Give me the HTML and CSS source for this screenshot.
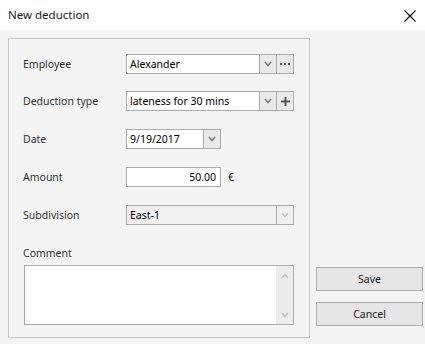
FILE: index.html
```html
<!DOCTYPE html>
<html>
<head>
<meta charset="utf-8">
<link rel="stylesheet" href="styles.css">
</head>
<body>
<div class="window">
  <div class="titlebar">
    <span class="title">New deduction</span>
    <svg class="close" width="12" height="12" viewBox="0 0 12 12"><path d="M0.5 0.5 L11.5 11.5 M11.5 0.5 L0.5 11.5" stroke="#000" stroke-width="1.1" fill="none"/></svg>
  </div>
  <div class="content">
    <div class="panel">
      <div class="row r1">
        <div class="label">Employee</div>
        <div class="field w-long">
          <div class="text">Alexander</div>
          <div class="btn"><svg width="8" height="6" viewBox="0 0 8 6"><path d="M1 1 L4 4.5 L7 1" stroke="#7a7a7a" stroke-width="1.6" fill="none"/></svg></div>
          <div class="btn"><svg width="10" height="4" viewBox="0 0 10 4"><rect x="0" y="1" width="2" height="2" fill="#555"/><rect x="4" y="1" width="2" height="2" fill="#555"/><rect x="8" y="1" width="2" height="2" fill="#555"/></svg></div>
        </div>
      </div>
      <div class="row r2">
        <div class="label">Deduction type</div>
        <div class="field w-long">
          <div class="text">lateness for 30 mins</div>
          <div class="btn"><svg width="8" height="6" viewBox="0 0 8 6"><path d="M1 1 L4 4.5 L7 1" stroke="#7a7a7a" stroke-width="1.6" fill="none"/></svg></div>
          <div class="btn"><svg width="9" height="9" viewBox="0 0 9 9"><path d="M0 4.5 H9 M4.5 0 V9" stroke="#555" stroke-width="2" fill="none"/></svg></div>
        </div>
      </div>
      <div class="row">
        <div class="label">Date</div>
        <div class="field w-short">
          <div class="text">9/19/2017</div>
          <div class="btn"><svg width="8" height="6" viewBox="0 0 8 6"><path d="M1 1 L4 4.5 L7 1" stroke="#7a7a7a" stroke-width="1.6" fill="none"/></svg></div>
        </div>
      </div>
      <div class="row">
        <div class="label">Amount</div>
        <div class="field w-short">
          <div class="text num">50.00</div>
        </div>
        <span class="currency">€</span>
      </div>
      <div class="row">
        <div class="label">Subdivision</div>
        <div class="field w-long disabled">
          <div class="text">East-1</div>
          <div class="btn"><svg width="8" height="6" viewBox="0 0 8 6"><path d="M1 1 L4 4.5 L7 1" stroke="#c2c2c2" stroke-width="1.6" fill="none"/></svg></div>
        </div>
      </div>
      <div class="comment-label">Comment</div>
      <div class="textarea">
        <div class="textarea-body"></div>
        <div class="scrollbar">
          <svg width="8" height="6" viewBox="0 0 8 6"><path d="M1 5 L4 1.5 L7 5" stroke="#c4c4c4" stroke-width="1.6" fill="none"/></svg>
          <svg width="8" height="6" viewBox="0 0 8 6"><path d="M1 1 L4 4.5 L7 1" stroke="#c4c4c4" stroke-width="1.6" fill="none"/></svg>
        </div>
      </div>
    </div>
    <div class="actions">
      <div class="button">Save</div>
      <div class="button">Cancel</div>
    </div>
  </div>
</div>
</body>
</html>
```
FILE: styles.css
```css
* { box-sizing: border-box; }
html, body { margin: 0; padding: 0; }
body {
  width: 425px;
  height: 344px;
  background: #f4f4f4;
  font-family: "Noto Sans", "Open Sans", sans-serif;
  font-size: 10.5px;
  color: #333;
  overflow: hidden;
}
.titlebar {
  height: 30px;
  background: #fff;
  display: flex;
  align-items: center;
  justify-content: space-between;
  padding: 0 9px 0 8px;
}
.title {
  font-size: 11.5px;
  color: #1a1a1a;
  margin-top: -1px;
}
.close { margin-top: 1px; }
.content {
  display: flex;
  align-items: flex-start;
  padding: 8px 0 0 8px;
}
.panel {
  width: 302px;
  height: 300px;
  border: 1px solid #c6c6c6;
  padding: 15px 0 0 14px;
  display: flex;
  flex-direction: column;
}
.row {
  display: flex;
  align-items: center;
  height: 20px;
  margin-bottom: 18px;
}
.row.r1 { margin-bottom: 17px; }
.label {
  width: 103px;
  flex: none;
}
.field {
  display: flex;
  height: 20px;
  border: 1px solid #ababab;
  background: #fff;
}
.field.w-long { width: 168px; }
.field.w-short { width: 95px; }
.field.disabled { background: #f0f0f0; }
.text {
  flex: 1;
  padding: 0 3px;
  line-height: 18px;
  color: #000;
  white-space: nowrap;
  overflow: hidden;
}
.text.num { text-align: right; padding-right: 4px; }
.btn {
  width: 17px;
  flex: none;
  border-left: 1px solid #ababab;
  background: #e9e9e9;
  display: flex;
  align-items: center;
  justify-content: center;
}
.disabled .btn { background: #f0f0f0; }
.currency {
  margin-left: 7px;
  color: #222;
}
.comment-label {
  margin-top: 3px;
  line-height: 14px;
}
.textarea {
  margin-top: 5px;
  margin-left: 1px;
  width: 270px;
  height: 60px;
  border: 1px solid #ababab;
  background: #fff;
  display: flex;
}
.textarea-body { flex: 1; }
.scrollbar {
  width: 17px;
  background: #ececec;
  display: flex;
  flex-direction: column;
  justify-content: space-between;
  align-items: center;
  padding: 7px 0 6px;
}
.actions {
  margin-left: 6px;
  margin-top: 229px;
  display: flex;
  flex-direction: column;
  gap: 11px;
}
.button {
  width: 107px;
  height: 24px;
  border: 1px solid #adadad;
  background: #e5e5e5;
  text-align: center;
  line-height: 22px;
  color: #222;
}
```
